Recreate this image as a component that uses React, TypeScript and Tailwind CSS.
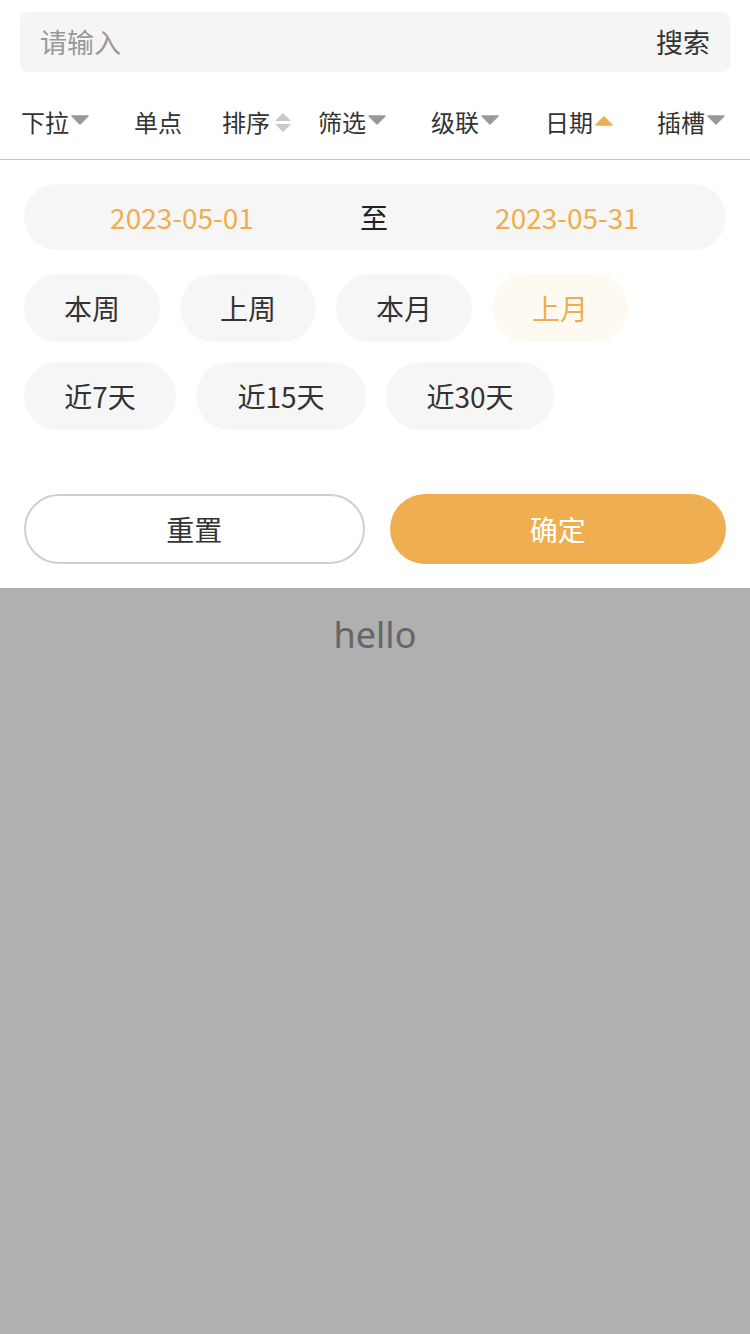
import React from "react";

const FONT = { fontFamily: '"Noto Sans CJK SC", "Noto Sans", sans-serif' };

const Down = ({ color = "#999" }: { color?: string }) => (
  <svg width="18" height="10" viewBox="0 0 18 10" className="ml-[2px] mt-[-4px]">
    <path d="M1 1 L17 1 L9 9 Z" fill={color} strokeLinejoin="round" stroke={color} strokeWidth="1.5" />
  </svg>
);

const Up = ({ color = "#f0ad4e" }: { color?: string }) => (
  <svg width="18" height="10" viewBox="0 0 18 10" className="ml-[2px] mt-[-2px]">
    <path d="M1 9 L17 9 L9 1 Z" fill={color} strokeLinejoin="round" stroke={color} strokeWidth="1.5" />
  </svg>
);

const Sort = () => (
  <svg width="18" height="22" viewBox="0 0 18 22" className="ml-[4px] mt-[2px]">
    <path d="M1 9 L17 9 L9 1 Z" fill="#c8c8c8" />
    <path d="M1 12 L17 12 L9 20 Z" fill="#c8c8c8" />
  </svg>
);

const tabs = [
  { label: "下拉", icon: <Down />, w: "w-[113px]" },
  { label: "单点", icon: null, w: "w-[88px]" },
  { label: "排序", icon: <Sort />, w: "w-[96px]" },
  { label: "筛选", icon: <Down />, w: "w-[113px]" },
  { label: "级联", icon: <Down />, w: "w-[114px]" },
  { label: "日期", icon: <Up />, w: "w-[112px]" },
  { label: "插槽", icon: <Down />, w: "w-[80px]" },
];

const chips1 = ["本周", "上周", "本月", "上月"];
const chips2 = [
  { label: "近7天", w: "w-[152px]" },
  { label: "近15天", w: "w-[170px]" },
  { label: "近30天", w: "w-[168px]" },
];

export default function App() {
  return (
    <div className="w-[750px] h-[1334px] flex flex-col bg-white" style={FONT}>
      <div className="px-[20px] pt-[12px]">
        <div className="h-[60px] bg-[#f5f5f5] rounded-[8px] flex items-center justify-between px-[20px]">
          <span className="text-[27px] text-[#999]">请输入</span>
          <span className="text-[27px] text-[#333]">搜索</span>
        </div>
      </div>
      <div className="h-[88px] flex items-center pl-[21px] border-b border-[#c8c8c8]">
        {tabs.map((t) => (
          <div key={t.label} className={`${t.w} flex items-center shrink-0 pt-[12px]`}>
            <span className="text-[24px] text-[#333]">{t.label}</span>
            {t.icon}
          </div>
        ))}
      </div>
      <div className="px-[24px] pt-[24px] pb-[24px]">
        <div className="h-[66px] rounded-full bg-[#f6f6f6] flex items-center text-[28px]">
          <span className="w-[316px] text-center text-[#f0ad4e]">2023-05-01</span>
          <span className="flex-1 text-center text-[#222]">至</span>
          <span className="w-[318px] text-center text-[#f0ad4e]">2023-05-31</span>
        </div>
        <div className="flex gap-[20px] mt-[24px]">
          {chips1.map((c) => (
            <div
              key={c}
              className={`h-[68px] w-[136px] rounded-full flex items-center justify-center text-[28px] ${
                c === "上月" ? "bg-[#fffaf1] text-[#f0ad4e]" : "bg-[#f6f6f6] text-[#333]"
              }`}
            >
              {c}
            </div>
          ))}
        </div>
        <div className="flex gap-[20px] mt-[20px]">
          {chips2.map((c) => (
            <div
              key={c.label}
              className={`${c.w} h-[68px] rounded-full flex items-center justify-center text-[28px] bg-[#f6f6f6] text-[#333]`}
            >
              {c.label}
            </div>
          ))}
        </div>
        <div className="flex gap-[25px] mt-[64px]">
          <button className="flex-1 h-[70px] rounded-full border-2 border-[#cfcfcf] text-[28px] text-[#333] bg-white">
            重置
          </button>
          <button className="flex-1 h-[70px] rounded-full bg-[#efae50] text-[28px] text-white">确定</button>
        </div>
      </div>
      <div className="flex-1 bg-[#b0b0b0] flex justify-center">
        <span className="text-[36px] text-[#666] mt-[20px]" style={{ fontFamily: '"Noto Sans", sans-serif' }}>
          hello
        </span>
      </div>
    </div>
  );
}
